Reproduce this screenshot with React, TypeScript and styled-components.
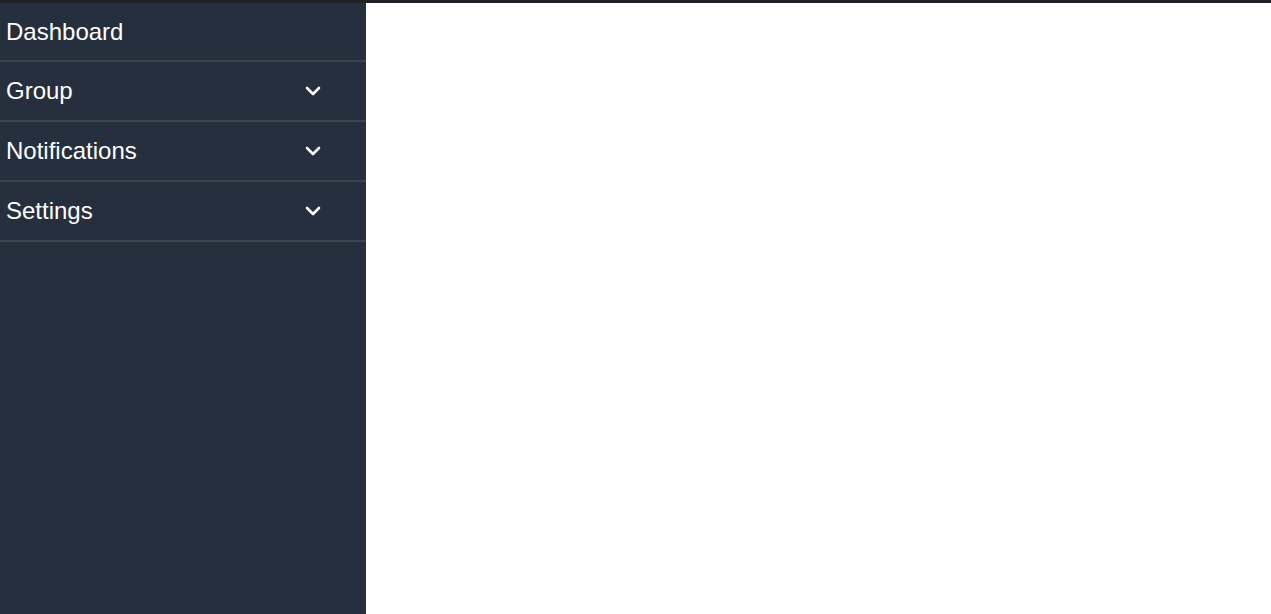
import React from "react";
import styled, { createGlobalStyle } from "styled-components";

const GlobalStyle = createGlobalStyle`
  html, body {
    margin: 0;
    padding: 0;
    background: #fff;
    font-family: "Liberation Sans", Arial, sans-serif;
  }
`;

const items = [
  { label: "Dashboard", sub: false },
  { label: "Group", sub: true },
  { label: "Notifications", sub: true },
  { label: "Settings", sub: true },
];

const Chevron = () => (
  <svg width="16" height="10" viewBox="0 0 16 10" fill="none">
    <polyline
      points="2,2 8,8 14,2"
      stroke="#fff"
      strokeWidth="2.6"
      strokeLinecap="round"
      strokeLinejoin="round"
    />
  </svg>
);

const App = () => {
  return (
    <>
      <GlobalStyle />
      <Page>
        <TopBar />
        <Body>
          <Sidebar>
            {items.map((item) => (
              <NavItem key={item.label}>
                <Label>{item.label}</Label>
                {item.sub && (
                  <Arrow>
                    <Chevron />
                  </Arrow>
                )}
              </NavItem>
            ))}
          </Sidebar>
          <Main />
        </Body>
      </Page>
    </>
  );
};

const Page = styled.div`
  display: flex;
  flex-direction: column;
  height: 614px;
  width: 100%;
`;

const TopBar = styled.div`
  height: 3px;
  background: #1e2125;
  flex-shrink: 0;
`;

const Body = styled.div`
  display: flex;
  flex: 1;
`;

const Sidebar = styled.nav`
  width: 366px;
  background: #252f3e;
  display: flex;
  flex-direction: column;
`;

const NavItem = styled.div`
  height: 58px;
  display: flex;
  align-items: center;
  justify-content: space-between;
  padding: 0 45px 0 6px;
  border-bottom: 2px solid #3a4350;

  &:first-child {
    height: 57px;
  }
`;

const Label = styled.span`
  color: #fff;
  font-size: 24px;
  line-height: 1;
`;

const Arrow = styled.span`
  display: flex;
  align-items: center;
`;

const Main = styled.main`
  flex: 1;
  background: #fff;
`;

export default App;
